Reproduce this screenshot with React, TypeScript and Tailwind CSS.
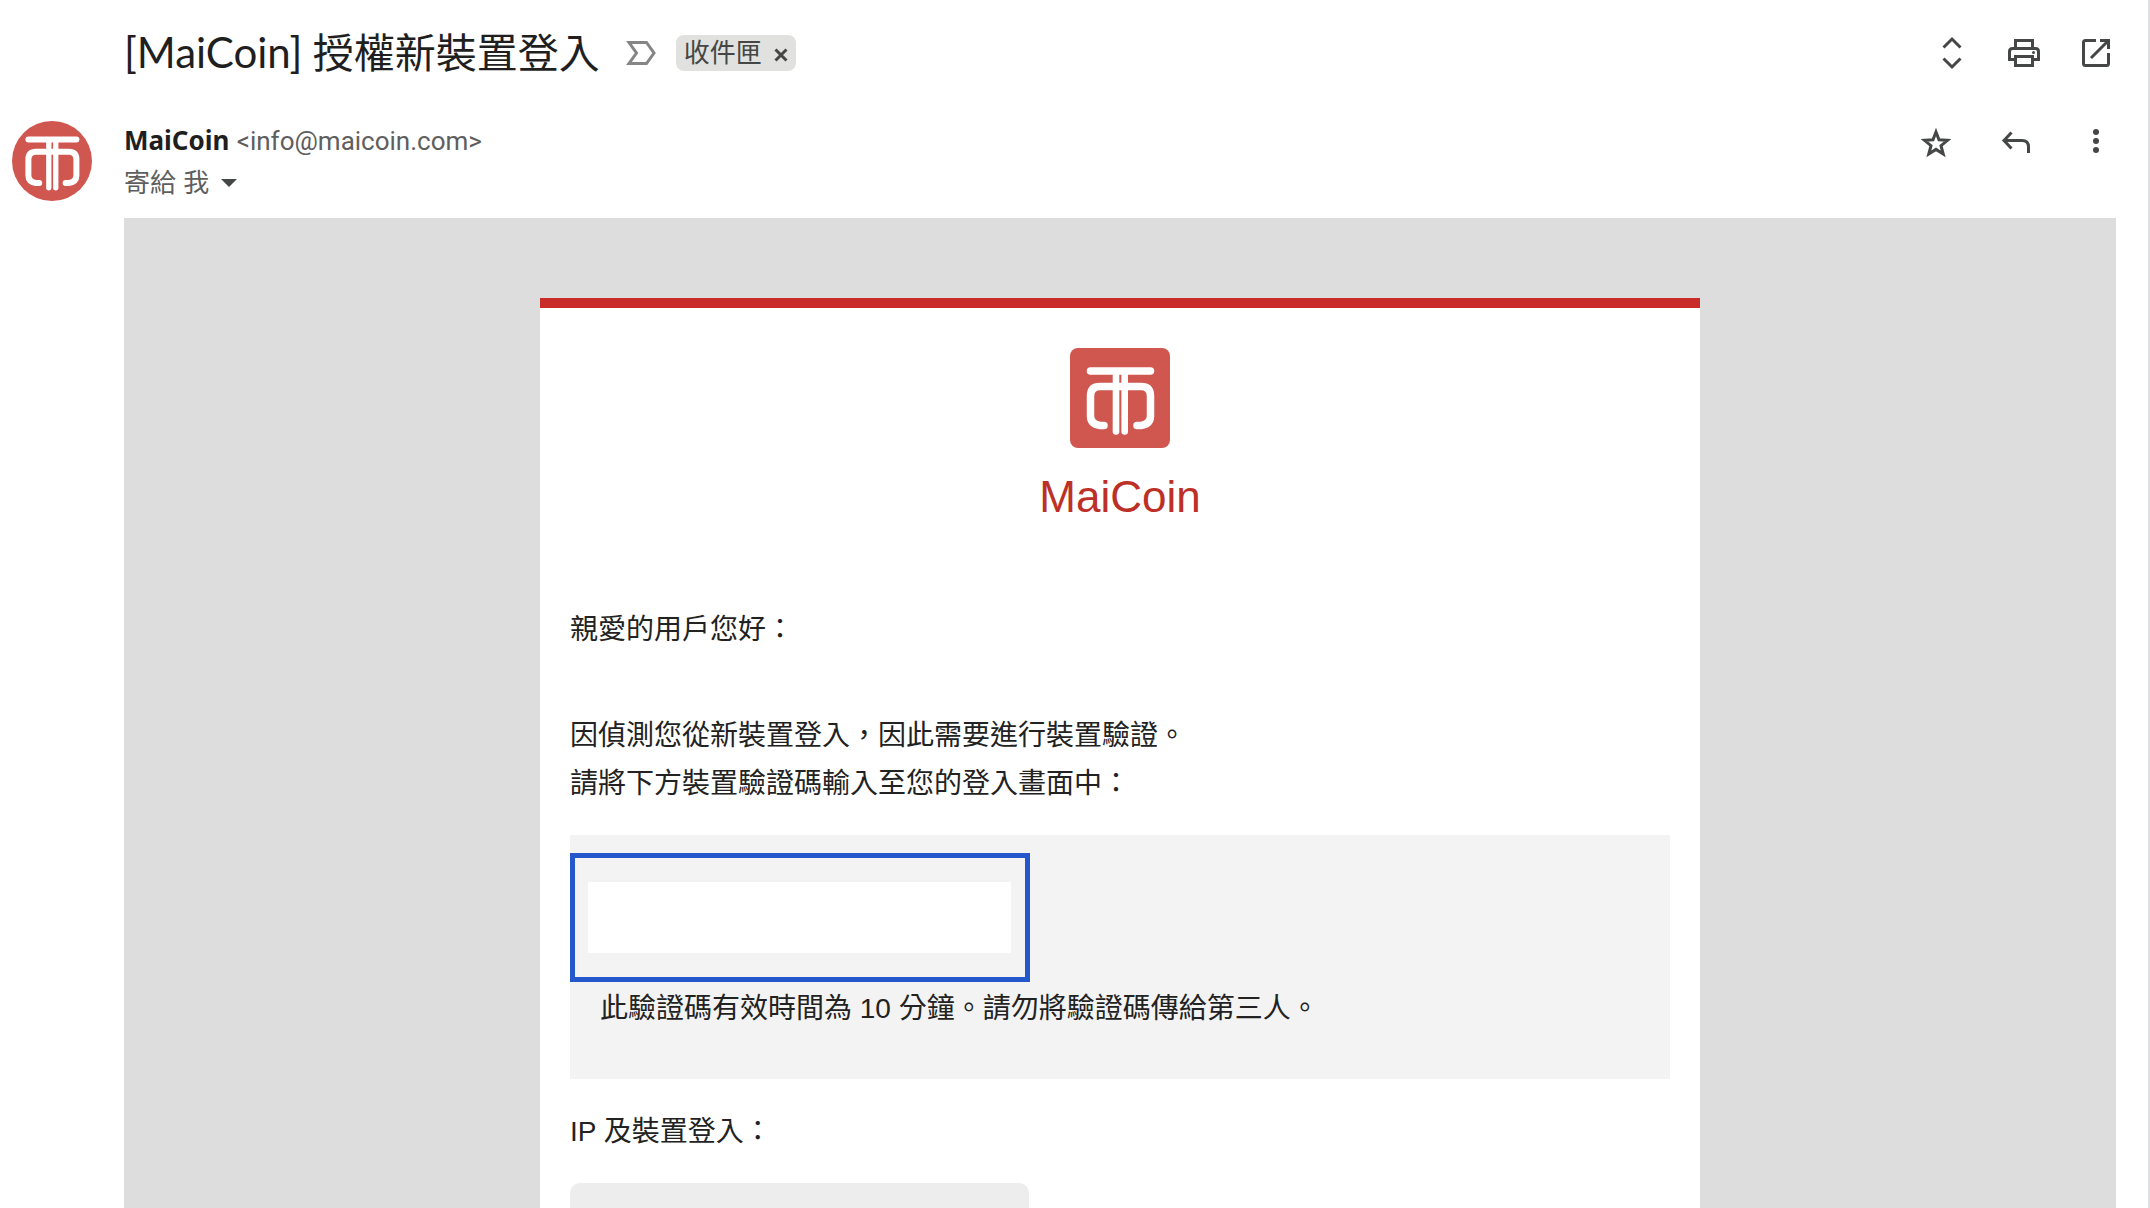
import type { ReactNode } from "react";

const BRAND_RED = "#d05650";

function MaiCoinMark({ className }: { className: string }) {
  return (
    <svg viewBox="0 0 100 100" className={className} role="img" aria-label="MaiCoin">
      <rect width="100" height="100" fill={BRAND_RED} />
      <g fill="none" stroke="#fff" strokeWidth="7.500" strokeLinecap="round" strokeLinejoin="round">
        <path d="M20.500 23H80.500" />
        <path d="M46 24V83.500" strokeWidth="6.600" />
        <path d="M54.700 24V83.500" strokeWidth="6.600" />
        <path d="M34 77.500H30Q20.500 76 20.500 68V48Q20.500 38.500 30 38.500H71Q80.500 38.500 80.500 48V68Q80.500 76 71 77.500H67" />
      </g>
    </svg>
  );
}

function IconButton({ label, children }: { label: string; children: ReactNode }) {
  return (
    <button type="button" aria-label={label} className="size-10 cursor-pointer">
      <svg viewBox="0 0 40 40" className="size-10" fill="none" stroke="#444746" strokeWidth="3">
        {children}
      </svg>
    </button>
  );
}

function SubjectBar() {
  return (
    <div className="flex items-center pl-28">
      <h1 className="font-['Lato','Noto_Sans_CJK_TC',sans-serif] text-[41px] leading-[58px] text-[#1f1f1f]">
        <span className="text-[42px]">[MaiCoin]</span> 授權新裝置登入
      </h1>
      <button type="button" aria-label="重要郵件標記" className="ml-[26px] cursor-pointer">
        <svg viewBox="0 0 30 24" className="h-6 w-[30px]" fill="none" stroke="#858585" strokeWidth="3">
          <path d="M3 1.500H20.500L28 12L20.500 22.500H3L10.500 12Z" />
        </svg>
      </button>
      <div className="ml-5 flex h-9 items-center gap-3 rounded-lg bg-[#e1e1df] pl-2 pr-2 text-[#444746]">
        <span className="text-[26px] leading-9">收件匣</span>
        <button type="button" aria-label="移除標籤" className="cursor-pointer">
          <svg viewBox="0 0 14 14" className="mt-1 size-3.5" stroke="#444746" strokeWidth="3">
            <path d="M1.500 1.500L12.500 12.500M12.500 1.500L1.500 12.500" />
          </svg>
        </button>
      </div>
      <div className="ml-auto flex gap-8">
        <IconButton label="全部展開">
          <path d="M11.500 14.500L20 6L28.500 14.500M11.500 25.500L20 34L28.500 25.500" />
        </IconButton>
        <IconButton label="全部列印">
          <path d="M11.500 15V7.500H28.500V15M11.500 26.500H5.500V18.500Q5.500 15.500 8.500 15.500H31.500Q34.500 15.500 34.500 18.500V26.500H28.500M11.500 23.500H28.500V32.500H11.500Z" />
          <circle cx="29.500" cy="19.500" r="1.500" fill="#444746" stroke="none" />
        </IconButton>
        <IconButton label="在新視窗中開啟">
          <path d="M20 7.500H9.500Q7.500 7.500 7.500 9.500V30.500Q7.500 32.500 9.500 32.500H30.500Q32.500 32.500 32.500 30.500V20M24 7.500H32.500V16M32 8L15 25" />
        </IconButton>
      </div>
    </div>
  );
}

function SenderBar() {
  return (
    <div className="flex items-start">
      <MaiCoinMark className="size-20 rounded-full" />
      <div className="ml-8">
        <p className="text-[26px] leading-[38px]">
          <strong className="font-['Noto_Sans',sans-serif] font-bold text-[#1f1f1f]">MaiCoin</strong>{" "}
          <span className="font-['Roboto',sans-serif] text-[#5e5e5e]">&lt;info@maicoin.com&gt;</span>
        </p>
        <button type="button" className="flex cursor-pointer items-center gap-3 text-[26px] leading-[46px] text-[#5e5e5e]">
          寄給 我
          <svg viewBox="0 0 16 8" className="h-2 w-4" fill="#444746">
            <path d="M0 0H16L8 8Z" />
          </svg>
        </button>
      </div>
      <div className="ml-auto flex gap-10">
        <IconButton label="加上星號">
          <path
            d="M20 11L23 18.800L31.500 19.300L25 24.700L27.200 33L20 28.400L12.800 33L15 24.700L8.500 19.300L17 18.800Z"
            strokeMiterlimit="10"
          />
        </IconButton>
        <IconButton label="回覆">
          <path d="M15.500 11.500L8 19.500L15.500 27.500M8 19.500H26Q32.500 19.500 32.500 26V32" />
        </IconButton>
        <IconButton label="更多">
          <g fill="#444746" stroke="none">
            <circle cx="20" cy="11" r="3" />
            <circle cx="20" cy="20" r="3" />
            <circle cx="20" cy="29" r="3" />
          </g>
        </IconButton>
      </div>
    </div>
  );
}

function MessageBody() {
  return (
    <article className="ml-28 mt-3 grow bg-[#dddddd] pt-20">
      <div className="mx-auto min-h-full max-w-[1160px] border-t-10 border-[#c92b29] bg-white px-[30px] pt-10 text-[28px] leading-[48px] text-[#222222]">
        <div className="flex flex-col items-center">
          <MaiCoinMark className="size-[100px] rounded-lg" />
          <h2 className="mt-5 text-[44px] leading-[58px] text-[#bd3027]">MaiCoin</h2>
        </div>
        <p className="mt-20">親愛的用戶您好：</p>
        <p className="mt-[58px]">
          因偵測您從新裝置登入，因此需要進行裝置驗證。
          <br />
          請將下方裝置驗證碼輸入至您的登入畫面中：
        </p>
        <section className="mt-[27px] bg-[#f3f3f3] pb-[46px] pt-[18px]">
          <div className="h-[129px] w-[460px] max-w-full border-5 border-[#2457cc] py-6 pl-[13px] pr-[14px]">
            <div className="h-full bg-white" />
          </div>
          <p className="mt-[3px] pl-[30px]">此驗證碼有效時間為 10 分鐘。請勿將驗證碼傳給第三人。</p>
        </section>
        <p className="mt-[29px]">IP 及裝置登入：</p>
        <div className="mt-[27px] h-40 w-[459px] max-w-full rounded-[10px] bg-[#ededed]" />
      </div>
    </article>
  );
}

export default function App() {
  return (
    <main
      lang="zh-TW"
      className="flex h-screen flex-col overflow-hidden border-r-2 border-[#dfe0e4] bg-white pl-3 pr-8 pt-[23px] font-['Liberation_Sans','Noto_Sans_CJK_TC',sans-serif]"
    >
      <SubjectBar />
      <div className="mt-[39px]">
        <SenderBar />
      </div>
      <MessageBody />
    </main>
  );
}
